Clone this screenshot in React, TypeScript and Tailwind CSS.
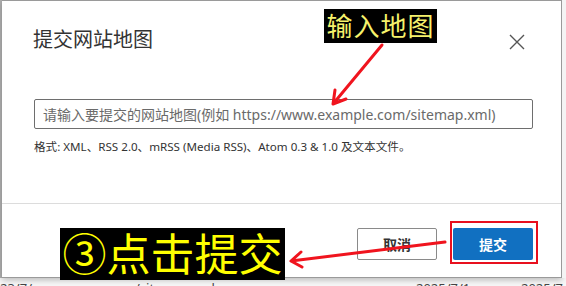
import React from 'react';

const cjk = { fontFamily: '"Noto Sans", "Noto Sans CJK SC", sans-serif' };

export default function App() {
  return (
    <div className="relative h-[286px] w-[566px] overflow-hidden bg-[#f7f7f7]" style={cjk}>
      <div className="flex h-[278px]">
        <div className="w-[2px] bg-[#b0b0b0]" />
        <div className="flex w-[560px] flex-col border-t border-r border-b border-[#9a9a9a] bg-white shadow-[0_2px_6px_rgba(0,0,0,0.25)]">
          {/* header */}
          <div className="flex h-[54px] items-start justify-between pl-[31px] pr-[36px] pt-[25px]">
            <h1 className="text-[20px] leading-[28px] text-[#333]">提交网站地图</h1>
            <svg width="16" height="16" viewBox="0 0 16 16" className="mt-[8px]">
              <path d="M1 1 L15 15 M15 1 L1 15" stroke="#555" strokeWidth="1.4" fill="none" />
            </svg>
          </div>

          {/* body */}
          <div className="h-[148px] pl-[32px] pt-[44px]">
            <input
              type="text"
              placeholder="请输入要提交的网站地图(例如 https://www.example.com/sitemap.xml)"
              className="h-[30px] w-[499px] rounded-[2px] border border-[#6e6e6e] px-[8px] text-[14px] text-[#333] outline-none placeholder:text-[#6a6a6a]"
            />
            <p className="mt-[9px] text-[11.6px] leading-[18px] text-[#333]">
              格式: XML、RSS 2.0、mRSS (Media RSS)、Atom 0.3 &amp; 1.0 及文本文件。
            </p>
          </div>

          {/* footer */}
          <div className="flex flex-1 items-start justify-end gap-[16px] border-t border-[#dcdcdc] pr-[28px] pt-[24px]">
            <button className="h-[32px] w-[80px] rounded-[2px] border border-[#8a8a8a] bg-white text-[14px] font-bold text-[#333]">
              取消
            </button>
            <button className="h-[32px] w-[80px] rounded-[2px] bg-[#1170c1] text-[14px] font-bold text-white">
              提交
            </button>
          </div>
        </div>
        <div className="flex-1 bg-[#f4f4f4]" />
      </div>

      {/* page behind, peeking at the bottom */}
      <div className="flex h-[8px] items-start overflow-hidden whitespace-nowrap text-[13px] leading-[16px] text-[#444]">
        <span className="mt-[2px] w-[416px] overflow-hidden">23/7/www.wangz.com/sitemap.xml</span>
        <span className="mt-[2px] w-[105px] overflow-hidden">2025/7/1</span>
        <span className="mt-[2px] overflow-hidden">2025/7</span>
      </div>

      {/* annotations */}
      <div className="absolute left-[324px] top-[9px] flex h-[34px] w-[113px] items-center justify-center bg-black">
        <span className="text-[26px] leading-none tracking-[1px] text-[#f6f26c]">输入地图</span>
      </div>
      <div className="absolute left-[60px] top-[228px] flex h-[52px] w-[225px] items-center justify-center bg-black">
        <span className="text-[44px] leading-none text-[#ffff00]">③点击提交</span>
      </div>
      <div className="absolute left-[450px] top-[221px] h-[43px] w-[88px] border-2 border-[#e8101e]" />

      <svg className="absolute left-0 top-0" width="566" height="286" viewBox="0 0 566 286">
        <g stroke="#f0141e" strokeWidth="3" strokeLinecap="round" fill="none">
          <path d="M382 45 L333 104 M333 104 L346 99 M333 104 L335 90" />
          <path d="M445 242 L291 261 M291 261 L302 267 M291 261 L301 252" />
        </g>
      </svg>
    </div>
  );
}
